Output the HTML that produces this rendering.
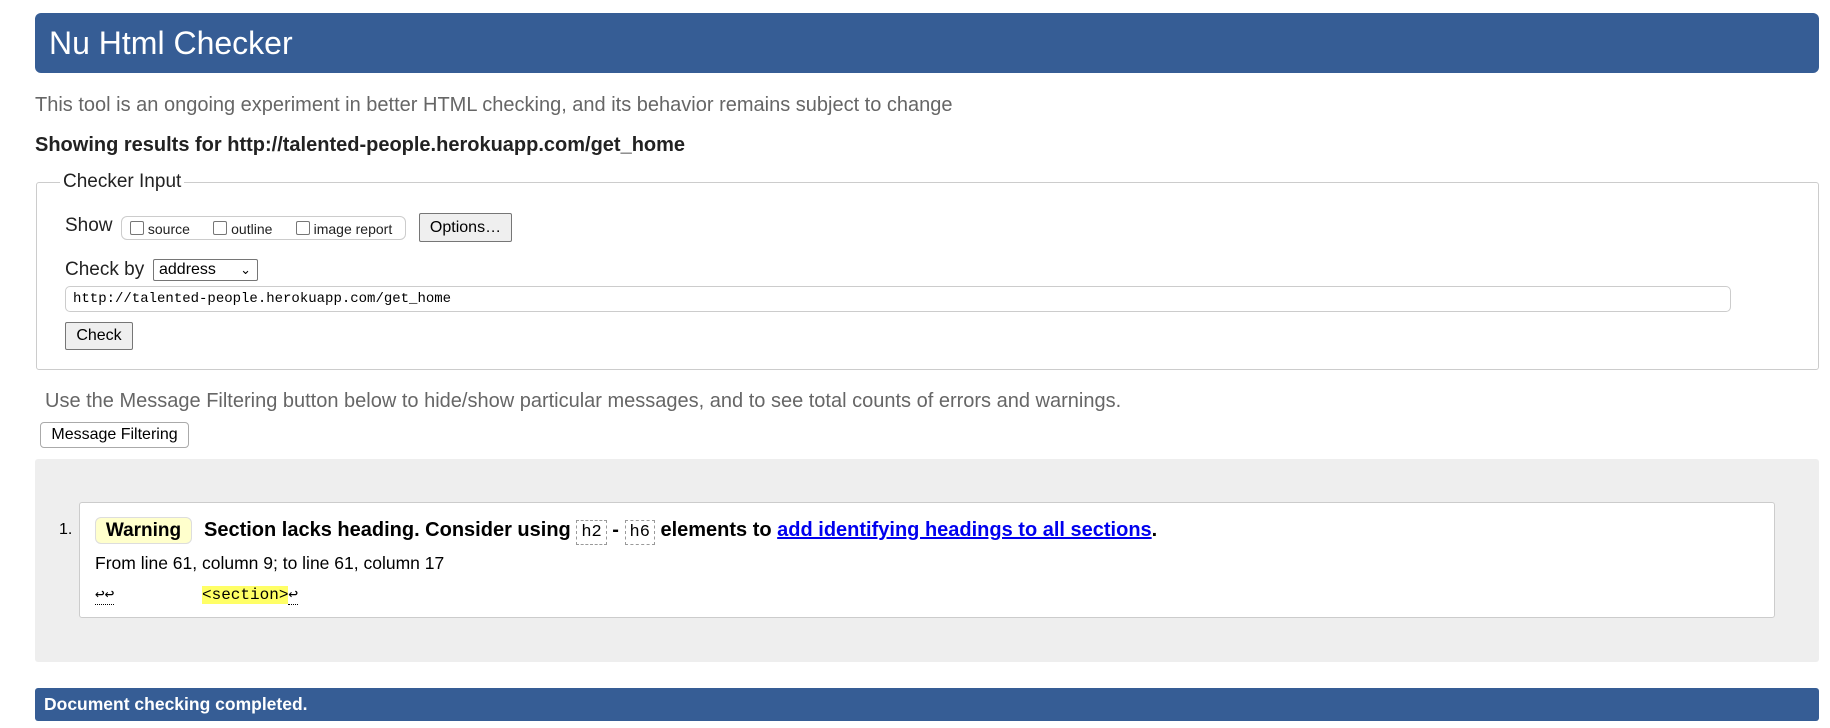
<!DOCTYPE html>
<html><head><meta charset="utf-8"><style>
*{box-sizing:border-box;margin:0;padding:0}
body{width:1830px;height:728px;background:#fff;font-family:"Liberation Sans",Arial,sans-serif;color:#000;position:relative;overflow:hidden}
.a{position:absolute;white-space:nowrap}
.hdr{left:35px;top:13px;width:1784px;height:60px;background:#365d95;border-radius:6px;color:#fff;font-size:32px;padding-left:14px;line-height:60px}
.btn{background:#efefef;border:1px solid #767676;border-radius:2px;font-size:16px;text-align:center}
.cb{display:inline-block;width:14px;height:14px;border:1px solid #767676;border-radius:2px;vertical-align:-1px;background:#fff}
.mono{font-family:"Liberation Mono",monospace}
</style></head><body>
<div class="a hdr">Nu Html Checker</div>
<div class="a" style="left:35px;top:94px;font-size:20px;color:#666">This tool is an ongoing experiment in better HTML checking, and its behavior remains subject to change</div>
<div class="a" style="left:35px;top:134px;font-size:20px;font-weight:bold;color:#222">Showing results for http://talented-people.herokuapp.com/get_home</div>
<div class="a" style="left:36px;top:182px;width:1783px;height:188px;border:1px solid #ccc;border-radius:3px"></div>
<div class="a" style="left:60px;top:171px;background:#fff;padding:0 3px;font-size:19px;color:#222">Checker Input</div>
<div class="a" style="left:65px;top:215px;font-size:19px;color:#222">Show</div>
<div class="a" style="left:121px;top:216px;width:285px;height:24px;border:1px solid #ccc;border-radius:6px;font-size:14px;color:#222;padding:2px 8px;line-height:20px"><span class="cb"></span> source &nbsp; &nbsp; &nbsp;<span class="cb"></span> outline &nbsp; &nbsp; &nbsp;<span class="cb"></span> image report</div>
<div class="a btn" style="left:419px;top:213px;width:93px;height:29px;line-height:27px">Options…</div>
<div class="a" style="left:65px;top:259px;font-size:19px;color:#222">Check by</div>
<div class="a" style="left:153px;top:259px;width:105px;height:22px;border:1px solid #767676;border-radius:2px;font-size:16px;padding-left:5px;line-height:20px">address<span style="position:absolute;right:6px;top:0;font-size:13px">&#8964;</span></div>
<div class="a mono" style="left:65px;top:286px;width:1666px;height:26px;border:1px solid #ccc;border-radius:5px;font-size:14px;padding-left:7px;line-height:24px">http://talented-people.herokuapp.com/get_home</div>
<div class="a btn" style="left:65px;top:322px;width:68px;height:28px;line-height:26px">Check</div>
<div class="a" style="left:45px;top:390px;font-size:20px;color:#666">Use the Message Filtering button below to hide/show particular messages, and to see total counts of errors and warnings.</div>
<div class="a" style="left:40px;top:422px;width:149px;height:26px;border:1px solid #aaa;border-radius:4px;background:#fff;font-size:16px;text-align:center;line-height:24px">Message Filtering</div>
<div class="a" style="left:35px;top:459px;width:1784px;height:203px;background:#eee;border-radius:3px"></div>
<div class="a" style="left:79px;top:502px;width:1696px;height:116px;background:#fff;border:1px solid #ccc;border-radius:3px"></div>
<div class="a" style="left:59px;top:521px;font-size:16px">1.</div>
<div class="a" style="left:95px;top:517px;width:97px;height:27px;background:#ffffcc;border:1px solid #ddd;border-radius:6px;font-size:19px;font-weight:bold;text-align:center;line-height:25px">Warning</div>
<div class="a" style="left:204px;top:518px;font-size:20px;font-weight:bold;line-height:24px">Section lacks heading. Consider using <span class="mono" style="font-weight:normal;font-size:17px;border:1px dashed #999;padding:2px 4px">h2</span> - <span class="mono" style="font-weight:normal;font-size:17px;border:1px dashed #999;padding:2px 4px">h6</span> elements to <a style="color:#00e;text-decoration:underline">add identifying headings to all sections</a>.</div>
<div class="a" style="left:95px;top:553px;font-size:17.5px">From line 61, column 9; to line 61, column 17</div>
<div class="a mono" style="left:95px;top:584px;font-size:16px"><span style="border-bottom:1px dotted #000">↩↩</span></div>
<div class="a mono" style="left:202px;top:584px;font-size:16px"><span style="background:#ffff66">&lt;section&gt;</span><span style="border-bottom:1px dotted #000">↩</span></div>
<div class="a" style="left:35px;top:688px;width:1784px;height:33px;background:#365d95;border-radius:3px;color:#fff;font-size:17.5px;font-weight:bold;padding-left:9px;line-height:33px">Document checking completed.</div>
</body></html>
